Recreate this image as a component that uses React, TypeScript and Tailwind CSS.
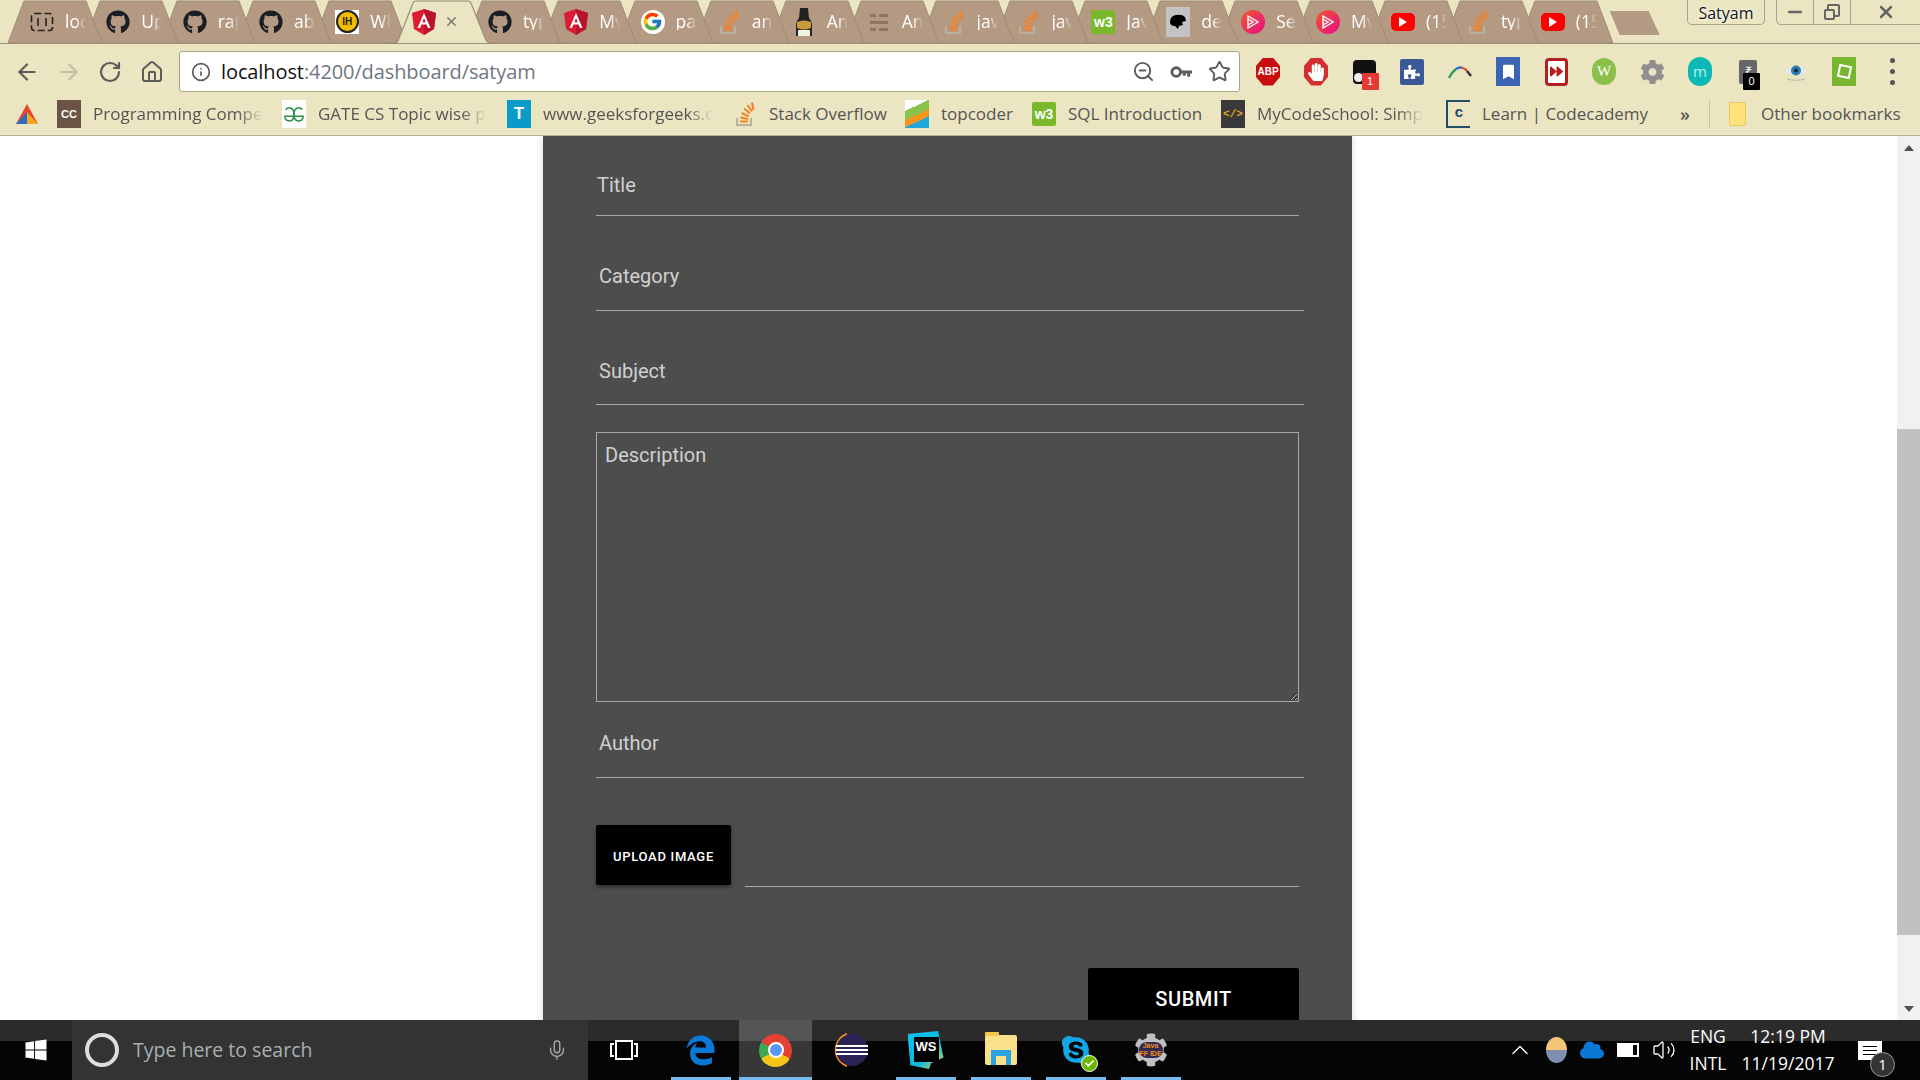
import React from 'react';
import { ArrowLeft, ArrowRight, RotateCw, Home, Info, ZoomOut, Star, Mic, ChevronUp, Volume2, X, Minus } from 'lucide-react';
import { FaGithub, FaHandPaper, FaPuzzlePiece, FaCog, FaWindows, FaSkype, FaCheck, FaCloud, FaBookmark, FaForward } from 'react-icons/fa';
import { FaEdgeLegacy } from 'react-icons/fa6';
import { FcGoogle } from 'react-icons/fc';

const W3 = ({ size = 'w-6 h-6' }: { size?: string }) => (
  <span className={`${size} bg-[#7ab82c] rounded-[2px] flex items-center justify-center text-white text-[14px] font-bold leading-none font-['Liberation_Sans',sans-serif]`}>
    w3
  </span>
);

const Angular = () => (
  <svg viewBox="0 0 24 26" className="w-6 h-[26px]">
    <polygon points="12,0 24,4 22,20 12,26 2,20 0,4" fill="#dd1b33" />
    <polygon points="12,0 24,4 22,20 12,26" fill="#b8152c" />
    <path d="M12 4 L5.5 19 H8 L9.4 15.5 H14.6 L16 19 H18.5 Z M10.3 13.3 L12 9 L13.7 13.3 Z" fill="#fff" fillRule="evenodd" />
  </svg>
);

const Stack = () => (
  <svg viewBox="0 0 24 26" className="w-6 h-[26px]">
    <path d="M4 17 V24 H18 V17" fill="none" stroke="#b9b2a0" strokeWidth="2" />
    <g stroke="#f48024" strokeWidth="2">
      <path d="M7 20.5 H15" />
      <path d="M7.4 16.5 L15.2 18" />
      <path d="M8.6 12 L15.8 15.4" />
      <path d="M11 7.5 L17 12.6" />
      <path d="M14.5 4 L19 10.4" />
      <path d="M19 1.5 L20.4 9" />
    </g>
  </svg>
);

const YouTube = () => (
  <span className="w-6 h-[18px] bg-[#f00] rounded-[5px] flex items-center justify-center">
    <span className="w-0 h-0 border-y-[5px] border-y-transparent border-l-[8px] border-l-white" />
  </span>
);

const Plural = () => (
  <span className="w-6 h-6 rounded-full bg-[linear-gradient(135deg,#f15b2a,#e80a89)] flex items-center justify-center">
    <svg viewBox="0 0 14 14" className="w-[14px] h-[14px]" fill="none" stroke="#fff" strokeWidth="1.4">
      <path d="M2 1 L12 7 L2 13 Z" />
      <path d="M2 4 L7 7 L2 10" />
    </svg>
  </span>
);

const tabIcons: Record<string, React.ReactNode> = {
  loop: (
    <svg viewBox="0 0 24 24" className="w-6 h-6" fill="none" stroke="#222" strokeWidth="1.6">
      <rect x="1.5" y="3.5" width="21" height="17" rx="3" strokeDasharray="7 3" />
      <path d="M8 8 V16 M16 8 V16" />
    </svg>
  ),
  gh: <FaGithub className="w-6 h-6 text-[#1b1f23]" />,
  ih: (
    <span className="w-6 h-6 bg-white flex items-center justify-center">
      <span className="w-[23px] h-[23px] rounded-full bg-[#f5bd02] border-2 border-[#222] flex items-center justify-center text-[10px] font-bold text-[#222] font-['Liberation_Sans',sans-serif]">
        IH
      </span>
    </span>
  ),
  ng: <Angular />,
  google: (
    <span className="w-6 h-6 rounded-full bg-white flex items-center justify-center">
      <FcGoogle className="w-[21px] h-[21px]" />
    </span>
  ),
  so: <Stack />,
  bottle: (
    <svg viewBox="0 0 20 30" className="w-5 h-[30px]">
      <path d="M6 1 H14 L15 11 Q18 14 18 19 V29 H2 V19 Q2 14 5 11 Z" fill="#222" />
      <path d="M3 15 Q10 12 17 15 V21 Q10 24 3 21 Z" fill="#c69a3a" />
      <rect x="4" y="23" width="12" height="6" fill="#f4f1e5" />
    </svg>
  ),
  list: (
    <svg viewBox="0 0 20 20" className="w-5 h-5" fill="#8a7766">
      <rect x="1" y="2" width="6" height="3" />
      <rect x="10" y="2" width="9" height="3" />
      <rect x="1" y="9" width="18" height="3" />
      <rect x="1" y="16" width="6" height="3" />
      <rect x="10" y="16" width="9" height="3" />
    </svg>
  ),
  w3: <W3 />,
  dev: (
    <span className="w-6 h-[30px] bg-[#c3c3c3] flex items-center justify-center">
      <svg viewBox="0 0 18 16" className="w-[18px] h-4" fill="#000">
        <path d="M1 8 Q1 2 7 1 Q13 0 16 3 L17 7 L13 8 L14 11 L10 12 L9 15 L6 12 Q1 12 1 8 Z" />
      </svg>
    </span>
  ),
  ps: <Plural />,
  yt: <YouTube />,
};

const tabs = [
  { icon: 'loop', title: 'loc' },
  { icon: 'gh', title: 'Upl' },
  { icon: 'gh', title: 'raj' },
  { icon: 'gh', title: 'abo' },
  { icon: 'ih', title: 'Wh' },
  { icon: 'ng', title: '', active: true },
  { icon: 'gh', title: 'typ' },
  { icon: 'ng', title: 'My' },
  { icon: 'google', title: 'pas' },
  { icon: 'so', title: 'ang' },
  { icon: 'bottle', title: 'Ang' },
  { icon: 'list', title: 'Ang' },
  { icon: 'so', title: 'jav' },
  { icon: 'so', title: 'jav' },
  { icon: 'w3', title: 'Jav' },
  { icon: 'dev', title: 'dev' },
  { icon: 'ps', title: 'Sea' },
  { icon: 'ps', title: 'My' },
  { icon: 'yt', title: '(15' },
  { icon: 'so', title: 'typ' },
  { icon: 'yt', title: '(15' },
];

function TabStrip() {
  return (
    <div className="h-[44px] flex pl-2 relative border-b border-[#98907a]">
      {tabs.map((tab, i) => (
        <div
          key={i}
          className={`relative w-[95px] h-[43px] shrink-0 ${i < 9 ? 'mr-[-18.7px]' : 'mr-[-20.1px]'}`}
          style={{ zIndex: tab.active ? 50 : 40 - i }}
        >
          <svg viewBox="0 0 95 43" className="absolute inset-0 w-full h-full overflow-visible">
            {tab.active ? (
              <path d="M0 43 H5 Q7 43 8 41 L23 3 Q24 1 26 1 H78 Q80 1 81 3 L95 38 Q97 43 100 43" fill="#ece5c2" stroke="#98907a" strokeWidth="1.2" />
            ) : (
              <path d="M0 43 L16 1 H78 L94 43 Z" fill="#b59a83" stroke="#9c8c78" strokeWidth="1" />
            )}
          </svg>
          <div className="relative h-full flex items-center">
            <span className="w-6 h-[30px] ml-[22px] flex items-center justify-center shrink-0">{tabIcons[tab.icon]}</span>
            {tab.active ? (
              <X className="w-[15px] h-[15px] ml-[8px] text-[#6e6e6e]" />
            ) : (
              <span className="ml-[11px] whitespace-nowrap text-white text-[17.5px] leading-none [mask-image:linear-gradient(to_right,black_11px,transparent_21px)]">
                {tab.title}
              </span>
            )}
          </div>
        </div>
      ))}
      <div className="ml-[16px] mt-[11px] w-[50px] h-[24px] bg-[#b59a83] [clip-path:polygon(0_0,78%_0,100%_100%,20%_100%)] relative z-0" />
      <div className="absolute top-0 left-[1687px] w-[78px] h-[25px] flex items-center justify-center rounded-b-[5px] border border-t-0 border-[#a8a48c] text-[16px] text-[#111] pt-[2px] [text-shadow:0_0_3px_#fff,0_0_2px_#fff]">
        Satyam
      </div>
      <div className="absolute top-0 right-0 w-[144px] h-[25px] flex rounded-bl-[5px] border-l border-b border-[#a8a48c] text-[#666]">
        <span className="w-[37px] border-r border-[#a8a48c] flex items-center justify-center">
          <Minus className="w-5 h-5" strokeWidth={3} />
        </span>
        <span className="w-[37px] border-r border-[#a8a48c] flex items-center justify-center">
          <span className="relative w-4 h-4">
            <span className="absolute right-0 top-0 w-[13px] h-[13px] border-2 border-[#666] rounded-[2px]" />
            <span className="absolute left-0 bottom-0 w-[11px] h-[11px] border-2 border-[#666] bg-[#ece5c2] rounded-[2px]" />
          </span>
        </span>
        <span className="flex-1 flex items-center justify-center">
          <X className="w-5 h-5" strokeWidth={3} />
        </span>
      </div>
    </div>
  );
}

const Badge = ({ text, color }: { text: string; color: string }) => (
  <span className={`absolute right-[-3px] bottom-[-6px] w-[17px] h-[17px] flex items-center justify-center text-white text-[11px] font-['Liberation_Sans',sans-serif] rounded-[1px] ${color}`}>
    {text}
  </span>
);

const extensions: React.ReactNode[] = [
  <span className="w-6 h-7 bg-[#c70d0d] [clip-path:polygon(30%_0,70%_0,100%_30%,100%_70%,70%_100%,30%_100%,0_70%,0_30%)] flex items-center justify-center text-white text-[10px] font-bold font-['Liberation_Sans',sans-serif]">ABP</span>,
  <span className="w-6 h-7 bg-[#d32f2f] [clip-path:polygon(30%_0,70%_0,100%_30%,100%_70%,70%_100%,30%_100%,0_70%,0_30%)] flex items-center justify-center">
    <FaHandPaper className="w-4 h-[18px] text-white" />
  </span>,
  <span className="relative w-[23px] h-[24px] bg-[#111] rounded-[4px]">
    <span className="absolute left-[1px] bottom-[2px] w-[9px] h-[9px] rounded-full bg-[#eee]" />
    <span className="absolute left-[11px] bottom-[2px] w-[9px] h-[9px] rounded-full bg-[#eee]" />
    <Badge text="1" color="bg-[#e53935]" />
  </span>,
  <span className="w-6 h-[26px] bg-[#3b5998] rounded-[2px] flex items-center justify-center">
    <FaPuzzlePiece className="w-4 h-4 text-white" />
  </span>,
  <svg viewBox="0 0 24 14" className="w-6 h-[14px]" fill="none" strokeWidth="2.4">
    <path d="M1 13 Q4 7 8 4" stroke="#2a9d5c" />
    <path d="M8 4 Q11 2 14 2.6" stroke="#2b6fc4" />
    <path d="M14 2.6 Q17 3.4 19 6" stroke="#e8502f" />
    <path d="M19 6 L23 11" stroke="#333" />
  </svg>,
  <span className="w-6 h-[29px] bg-[#3c64b4] flex items-center justify-center rounded-[1px]">
    <FaBookmark className="w-[11px] h-[18px] text-white" />
  </span>,
  <span className="w-[23px] h-[28px] bg-white border-[3px] border-[#b3201f] rounded-[4px] flex items-center justify-center">
    <FaForward className="w-[13px] h-[13px] text-[#b3201f]" />
  </span>,
  <span className="w-6 h-[27px] rounded-full bg-[#8cc04b] flex items-center justify-center text-white text-[15px] font-['Liberation_Serif',serif]">W</span>,
  <FaCog className="w-[25px] h-[28px] text-[#8f8f8f]" />,
  <span className="w-6 h-[29px] rounded-full bg-[#0db9b5] flex items-center justify-center text-[#bdeeee] text-[15px]">m</span>,
  <span className="relative w-[18px] h-[24px] bg-[#666] rounded-[2px] flex items-center justify-center text-white text-[13px] font-['Liberation_Sans',sans-serif]">
    ₹
    <Badge text="0" color="bg-black" />
  </span>,
  <svg viewBox="0 0 24 18" className="w-6 h-[18px]">
    <path d="M1 8 Q12 -3 23 8 Q12 17 1 8 Z" fill="#dfe9ee" />
    <circle cx="12" cy="7.5" r="5" fill="#2f7fb0" />
    <circle cx="12" cy="7.5" r="2" fill="#123" />
    <path d="M3 16 Q12 18.5 21 16" stroke="#b5b5a5" strokeWidth="1.2" fill="none" />
  </svg>,
  <span className="w-6 h-[29px] bg-[#77b62e] flex items-center justify-center rounded-[1px]">
    <span className="w-[13px] h-[13px] border-2 border-white rotate-12" />
  </span>,
  <span className="flex flex-col gap-[6px]">
    <span className="w-[5px] h-[5px] rounded-full bg-[#555]" />
    <span className="w-[5px] h-[5px] rounded-full bg-[#555]" />
    <span className="w-[5px] h-[5px] rounded-full bg-[#555]" />
  </span>,
];

function Toolbar() {
  return (
    <div className="h-[49px] flex items-center pl-[7px] pt-[6px] text-[#5c5c5c]">
      <ArrowLeft className="w-[26px] h-[26px] ml-[7px] mr-[16px]" strokeWidth={2} />
      <ArrowRight className="w-[26px] h-[26px] mr-[16px] text-[#c4c0a8]" strokeWidth={2} />
      <RotateCw className="w-[24px] h-[24px] mr-[18px]" strokeWidth={2.2} />
      <Home className="w-[24px] h-[24px] mr-[15px]" strokeWidth={2} />
      <div className="w-[1061px] h-[41px] bg-white rounded-[3px] border border-[#a9a488] flex items-center pl-[11px] pr-[8px] shrink-0">
        <Info className="w-[20px] h-[20px] text-[#5c5c5c] shrink-0" strokeWidth={2} />
        <span className="ml-[10px] text-[20px] tracking-[-0.1px] whitespace-nowrap text-[#111]">
          localhost<span className="text-[#6f7780]">:4200/dashboard/satyam</span>
        </span>
        <span className="ml-auto flex items-center gap-[15px]">
          <ZoomOut className="w-[23px] h-[23px]" strokeWidth={2} />
          <svg viewBox="0 0 24 14" className="w-[23px] h-[14px]" fill="none" stroke="#5c5c5c" strokeWidth="3">
            <circle cx="6.5" cy="7" r="4.5" />
            <path d="M11 7 H23 M19.5 7 V12 M15 7 V11" />
          </svg>
          <Star className="w-[23px] h-[23px]" strokeWidth={2} />
        </span>
      </div>
      <div className="flex ml-[4px]">
        {extensions.map((ext, i) => (
          <span key={i} className="w-12 h-[34px] flex items-center justify-center shrink-0">{ext}</span>
        ))}
      </div>
    </div>
  );
}

const bookmarks: { icon: React.ReactNode; label: string; width: string; fade?: boolean }[] = [
  {
    icon: (
      <svg viewBox="0 0 24 22" className="w-6 h-[22px]">
        <polygon points="12,1 23,21 1,21" fill="#e8442e" />
        <polygon points="12,9 23,21 12,21" fill="#f5a623" />
        <polygon points="12,9 1,21 12,21" fill="#2b6fc4" />
      </svg>
    ),
    label: '',
    width: 'w-[42px]',
  },
  {
    icon: <span className="w-6 h-7 bg-[#6b5444] flex items-center justify-center text-white text-[11px] font-bold font-['Liberation_Sans',sans-serif]">CC</span>,
    label: 'Programming Compe',
    width: 'w-[225px]',
    fade: true,
  },
  {
    icon: (
      <span className="w-6 h-7 bg-white flex items-center justify-center">
        <svg viewBox="0 0 24 18" className="w-[22px] h-[17px]" fill="none" stroke="#2f8d46" strokeWidth="1.6">
          <path d="M3 4 Q5 1 8 2 Q12 3 12 9 Q12 16 7 16 Q2 16 2 11 H12" />
          <path d="M21 4 Q19 1 16 2 Q12 3 12 9 Q12 16 17 16 Q22 16 22 11 H12" />
        </svg>
      </span>
    ),
    label: 'GATE CS Topic wise p',
    width: 'w-[225px]',
    fade: true,
  },
  {
    icon: <span className="w-6 h-7 bg-[#0a9bc9] flex items-center justify-center text-white text-[17px] font-bold font-['Liberation_Sans',sans-serif]">T</span>,
    label: 'www.geeksforgeeks.c',
    width: 'w-[226px]',
    fade: true,
  },
  { icon: <Stack />, label: 'Stack Overflow', width: 'w-[172px]' },
  {
    icon: (
      <span className="w-6 h-7 bg-[linear-gradient(155deg,#fff_28%,#8bc34a_28%,#8bc34a_52%,#f7941d_52%,#f7941d_70%,#1ea7d7_70%)]" />
    ),
    label: 'topcoder',
    width: 'w-[127px]',
  },
  { icon: <W3 size="w-6 h-6" />, label: 'SQL Introduction', width: 'w-[189px]' },
  {
    icon: <span className="w-6 h-7 bg-[#3a3a3a] flex items-center justify-center text-[#e8a41c] text-[11px] font-bold font-['Liberation_Mono',monospace]">&lt;/&gt;</span>,
    label: 'MyCodeSchool: Simp',
    width: 'w-[225px]',
    fade: true,
  },
  {
    icon: <span className="w-6 h-7 flex items-center justify-center text-[#1f4e66] text-[15px] font-bold border-l-2 border-y-2 border-[#1f4e66] font-['Liberation_Mono',monospace]">c</span>,
    label: 'Learn | Codecademy',
    width: 'w-[230px]',
  },
];

function BookmarkBar() {
  return (
    <div className="h-[43px] flex items-center pl-[15px] text-[17px] text-[#555] border-b border-[#b3ae95]">
      {bookmarks.map((b, i) => (
        <div key={i} className={`${b.width} flex items-center shrink-0`}>
          <span className="w-6 flex justify-center shrink-0">{b.icon}</span>
          {b.label && (
            <span className={`ml-[12px] whitespace-nowrap ${b.fade ? '[mask-image:linear-gradient(to_right,black_85%,transparent)]' : ''}`}>
              {b.label}
            </span>
          )}
        </div>
      ))}
      <span className="w-[18px] text-center text-[18px] font-semibold shrink-0">»</span>
      <span className="w-px h-[28px] bg-[#c8c3a8] ml-[15px]" />
      <span className="w-[17px] h-[24px] ml-[19px] bg-[#ffe27a] border border-[#e8c860] rounded-[2px] shrink-0" />
      <span className="ml-[15px] whitespace-nowrap">Other bookmarks</span>
    </div>
  );
}

const fieldText = "w-full h-6 block bg-transparent outline-none text-[20px] leading-6 placeholder:text-[#d0d0d0] text-[#d0d0d0]";

function PostForm() {
  return (
    <div className="w-[809px] ml-[543px] min-h-[1000px] bg-[#4d4d4d] pl-[53px] pt-[37px] shadow-[0_0_8px_rgba(0,0,0,0.15)] font-['Roboto',sans-serif]">
      <div className="w-[703px] pb-[18px] pl-[1px] border-b border-[#a8a8a8]">
        <input className={fieldText} placeholder="Title" />
      </div>
      <div className="w-[708px] mt-[48px] pb-[22px] pl-[3px] border-b border-[#a8a8a8]">
        <input className={fieldText} placeholder="Category" />
      </div>
      <div className="w-[708px] mt-[48px] pb-[21px] pl-[3px] border-b border-[#a8a8a8]">
        <input className={fieldText} placeholder="Subject" />
      </div>
      <textarea
        className="block w-[703px] h-[270px] mt-[27px] px-2 pt-[10px] bg-transparent outline-none border border-[#a8a8a8] text-[20px] leading-6 placeholder:text-[#d0d0d0] text-[#d0d0d0]"
        placeholder="Description"
      />
      <div className="w-[708px] mt-[29px] pb-[22px] pl-[3px] border-b border-[#a8a8a8]">
        <input className={fieldText} placeholder="Author" />
      </div>
      <div className="w-[703px] mt-[47px] flex gap-[14px]">
        <button className="w-[135px] h-[60px] pt-1 bg-black text-white text-[13px] font-medium tracking-[0.7px] rounded-[2px] shadow-[0_2px_4px_rgba(0,0,0,0.4)] shrink-0">
          UPLOAD IMAGE
        </button>
        <div className="flex-1 h-[62px] border-b border-[#a8a8a8]" />
      </div>
      <div className="w-[703px] mt-[81px] flex justify-end">
        <button className="w-[211px] h-[70px] pb-2 bg-black text-white text-[20px] font-medium tracking-[0.6px] rounded-[2px]">SUBMIT</button>
      </div>
    </div>
  );
}

function Scrollbar() {
  return (
    <div className="w-[23px] shrink-0 bg-[#f1f1f1] flex flex-col items-center">
      <span className="h-[23px] flex items-center justify-center shrink-0">
        <span className="w-0 h-0 border-x-[5px] border-x-transparent border-b-[6px] border-b-[#505050]" />
      </span>
      <div className="flex-1 w-full pt-[270px] pb-[62px]">
        <div className="w-full h-full bg-[#c1c1c1]" />
      </div>
      <span className="h-[23px] flex items-center justify-center shrink-0">
        <span className="w-0 h-0 border-x-[5px] border-x-transparent border-t-[6px] border-t-[#505050]" />
      </span>
    </div>
  );
}

const taskIcons: { node: React.ReactNode; running?: boolean; active?: boolean }[] = [
  { node: <FaEdgeLegacy className="w-[31px] h-[33px] text-[#0a78d7]" />, running: true },
  {
    node: (
      <span className="w-[33px] h-[33px] rounded-full bg-[conic-gradient(#e34133_0deg_120deg,#f5c518_120deg_240deg,#3da751_240deg_300deg,#e34133_300deg)] flex items-center justify-center">
        <span className="w-[16px] h-[16px] rounded-full bg-[#5a95f5] border-2 border-white" />
      </span>
    ),
    running: true,
    active: true,
  },
  {
    node: (
      <svg viewBox="0 0 36 36" className="w-9 h-9">
        <path d="M14 2 A17 17 0 0 0 14 34" fill="none" stroke="#f7941e" strokeWidth="2" />
        <circle cx="19" cy="18" r="16" fill="#2c2255" />
        <path d="M3 14 H35 M3 18 H35 M3 22 H35" stroke="#fff" strokeWidth="1.8" />
      </svg>
    ),
  },
  {
    node: (
      <span className="relative w-[36px] h-[38px]">
        <span className="absolute inset-0 bg-[linear-gradient(135deg,#07c3f2,#0fb8d8_60%,#e8e24a)] [clip-path:polygon(0_8%,85%_0,100%_70%,65%_85%,60%_100%,8%_90%)]" />
        <span className="absolute left-[6px] top-[6px] w-[25px] h-[25px] bg-black text-white text-[13px] font-bold leading-none pt-[3px] pl-[2px] font-['Liberation_Sans',sans-serif]">WS</span>
      </span>
    ),
    running: true,
  },
  {
    node: (
      <span className="relative w-[32px] h-[30px] bg-[#fbe08c] rounded-[2px] flex items-end justify-center">
        <span className="absolute left-0 top-[-3px] w-[14px] h-[4px] bg-[#f4c84f] rounded-t-[1px]" />
        <span className="w-[20px] h-[15px] bg-[#29a4e0] flex items-end justify-center">
          <span className="w-[10px] h-[9px] bg-[#fbe08c]" />
        </span>
      </span>
    ),
    running: true,
  },
  {
    node: (
      <span className="relative">
        <FaSkype className="w-[32px] h-[32px] text-[#12a8e8]" />
        <span className="absolute right-[-6px] bottom-[-6px] w-[17px] h-[17px] rounded-full bg-[#6bb700] border border-white flex items-center justify-center">
          <FaCheck className="w-[9px] h-[9px] text-white" />
        </span>
      </span>
    ),
    running: true,
  },
  {
    node: (
      <span className="relative w-[34px] h-[34px] flex items-center justify-center">
        <FaCog className="absolute inset-0 w-[34px] h-[34px] text-[#c0c0c0]" />
        <span className="relative w-[24px] rounded-full bg-[#332a4d] text-[#f08a24] text-[7px] leading-[8px] text-center font-bold font-['Liberation_Sans',sans-serif]">Java FF IDE</span>
      </span>
    ),
    running: true,
  },
];

function Taskbar() {
  return (
    <div className="h-[60px] flex text-white bg-[linear-gradient(to_bottom,#2b2b2b_21px,#050505_21px)]">
      <div className="w-[72px] flex items-center justify-center shrink-0">
        <FaWindows className="w-6 h-6" />
      </div>
      <div className="w-[516px] bg-[#333] flex items-center shrink-0">
        <span className="w-[34px] h-[34px] ml-[13px] rounded-full border-[4px] border-[#ddd] shrink-0" />
        <span className="ml-[14px] text-[19.5px] text-[#a8b0b4] whitespace-nowrap">Type here to search</span>
        <Mic className="w-[22px] h-[28px] ml-auto mr-[20px] text-[#aaa]" strokeWidth={1.5} />
      </div>
      <div className="w-[75px] pr-[3px] flex items-center justify-center shrink-0">
        <span className="w-[18px] h-5 border-2 border-white relative">
          <span className="absolute left-[-7px] top-[1px] w-[4px] h-[14px] border-2 border-r-0 border-white" />
          <span className="absolute right-[-7px] top-[1px] w-[4px] h-[14px] border-2 border-l-0 border-white" />
        </span>
      </div>
      {taskIcons.map((t, i) => (
        <div key={i} className="w-[75px] h-full flex justify-center shrink-0 relative">
          <div className={`w-[73px] h-full flex items-center justify-center ${t.active ? 'bg-white/20' : ''}`}>{t.node}</div>
          {t.running && <span className={`absolute bottom-0 h-[3px] bg-[#76b9ed] ${t.active ? 'w-[73px]' : 'w-[60px]'}`} />}
        </div>
      ))}
      <div className="ml-auto flex items-center shrink-0">
        <span className="w-9 flex justify-center"><ChevronUp className="w-7 h-7 text-white" strokeWidth={1.2} /></span>
        <span className="w-9 flex justify-center">
          <span className="w-[21px] h-[26px] rounded-[50%] bg-[linear-gradient(to_bottom,#f4c477_50%,#7e8fb0_50%)]" />
        </span>
        <span className="w-9 flex justify-center"><FaCloud className="w-6 h-6 text-[#0a78d7]" /></span>
        <span className="w-9 flex justify-center">
          <span className="relative w-[22px] h-[14px] border-2 border-white bg-[linear-gradient(to_right,#fff_80%,transparent_80%)]" />
        </span>
        <span className="w-9 flex justify-center"><Volume2 className="w-[24px] h-[24px]" strokeWidth={1.3} /></span>
        <div className="w-[52px] flex flex-col items-center text-[17.5px] leading-[27px] -mt-[1px]">
          <span>ENG</span>
          <span>INTL</span>
        </div>
        <div className="w-[108px] flex flex-col items-center text-[17.5px] leading-[27px] -mt-[1px]">
          <span>12:19 PM</span>
          <span>11/19/2017</span>
        </div>
        <div className="w-[78px] flex justify-start pl-[16px]">
          <span className="relative w-6 h-[19px] bg-white flex flex-col gap-[3px] justify-center px-[5px]">
            <span className="h-px bg-black" />
            <span className="h-px bg-black" />
            <span className="h-px bg-black" />
            <span className="absolute right-[-13px] bottom-[-17px] w-[25px] h-[25px] rounded-full bg-[#333] border border-[#999] flex items-center justify-center text-[15px]">1</span>
          </span>
        </div>
      </div>
    </div>
  );
}

export default function App() {
  return (
    <div className="w-[1920px] h-[1080px] flex flex-col overflow-hidden bg-white font-['Open_Sans',sans-serif]">
      <div className="bg-[#ece5c2] shrink-0">
        <TabStrip />
        <Toolbar />
        <BookmarkBar />
      </div>
      <div className="flex-1 flex min-h-0">
        <div className="flex-1 overflow-hidden min-w-0">
          <PostForm />
        </div>
        <Scrollbar />
      </div>
      <Taskbar />
    </div>
  );
}
